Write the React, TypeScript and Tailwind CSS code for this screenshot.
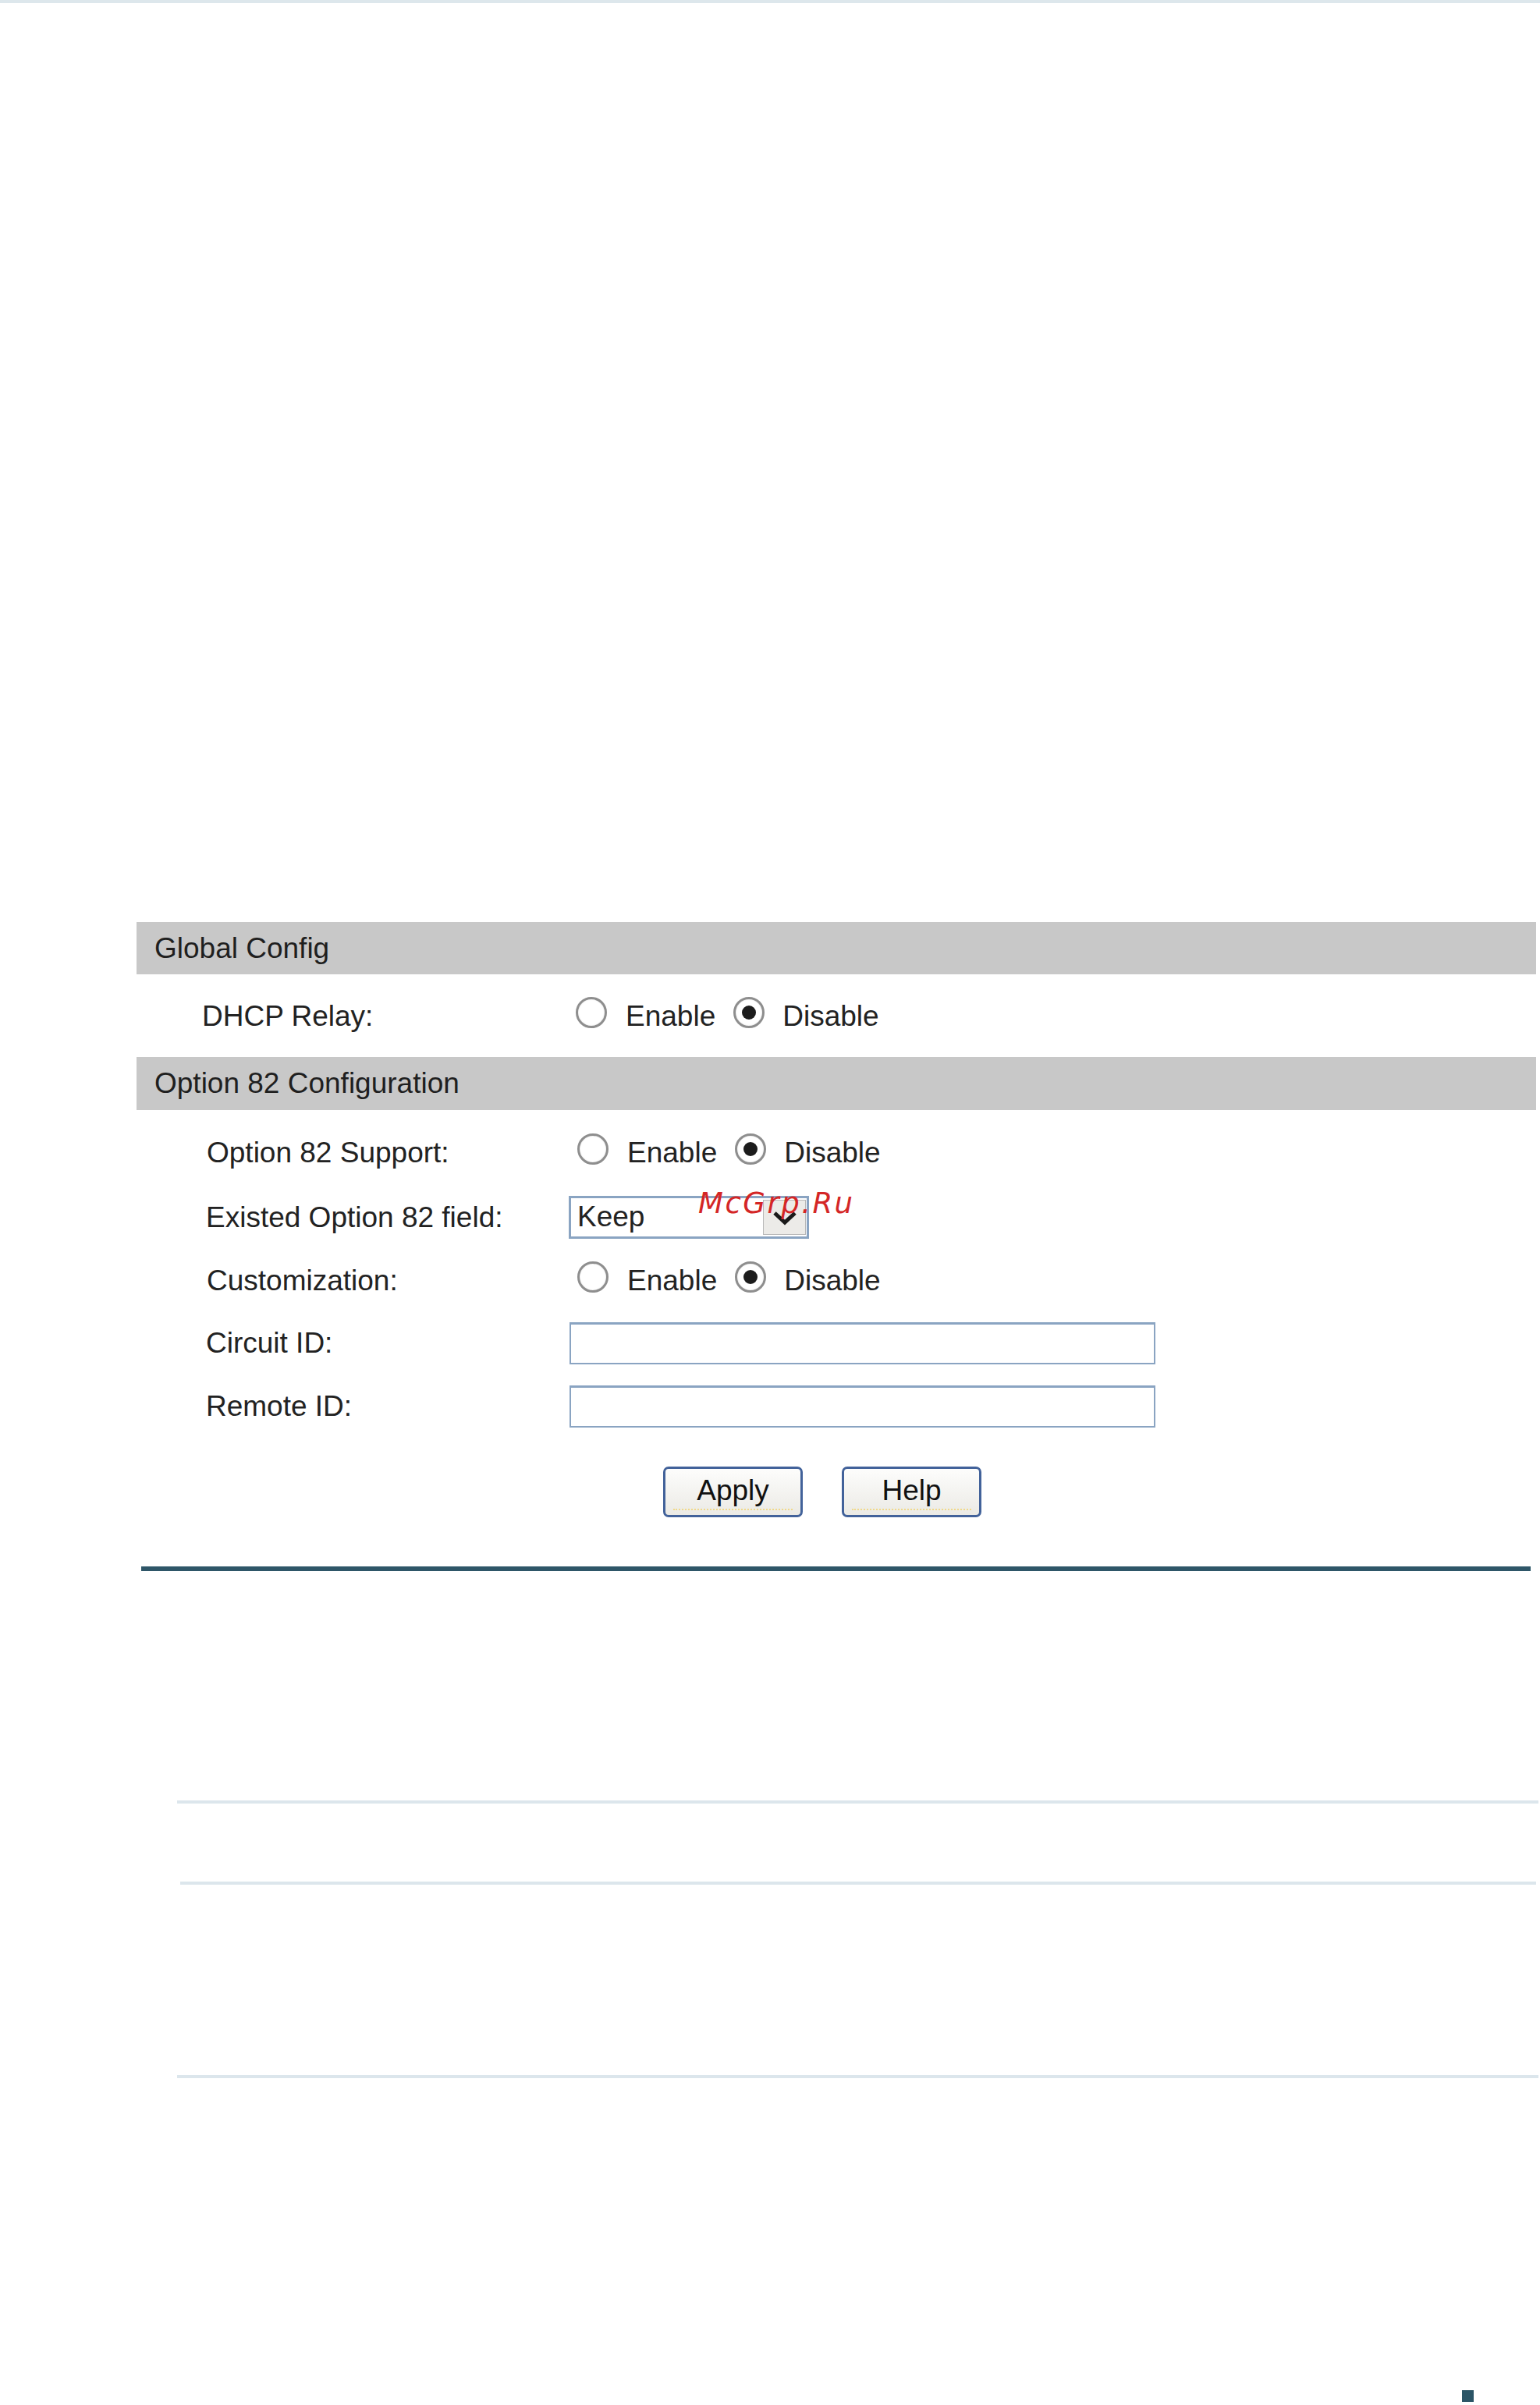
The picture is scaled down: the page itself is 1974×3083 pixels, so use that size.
import React from "react";

function Radio({ checked }: { checked?: boolean }) {
  return (
    <span className="w-[40px] h-[40px] rounded-full border-[3px] border-[#8e8e8e] bg-white flex items-center justify-center shrink-0 mb-[10px] shadow-[inset_0_0_2px_rgba(0,0,0,0.15)]">
      {checked && <span className="w-[18px] h-[18px] rounded-full bg-[#1c1c1c]" />}
    </span>
  );
}

function RadioGroup({ ml }: { ml: string }) {
  return (
    <div className={`flex items-center ${ml}`}>
      <Radio />
      <span className="ml-[24px]">Enable</span>
      <span className="ml-[23px] flex items-center">
        <Radio checked />
      </span>
      <span className="ml-[23px]">Disable</span>
    </div>
  );
}

function Bar({ children }: { children: React.ReactNode }) {
  return (
    <div className="h-[67px] bg-[#c8c8c8] flex items-center pl-[23px] text-[#1f1f1f]">
      {children}
    </div>
  );
}

function Btn({ children }: { children: React.ReactNode }) {
  return (
    <button className="relative w-[179px] h-[65px] rounded-[7px] border-[3px] border-[#42629a] bg-gradient-to-b from-[#fdfdfc] to-[#ebeae5] text-[37px] text-[#111] flex items-center justify-center leading-none">
      <span className="mb-[4px]">{children}</span>
      <span className="absolute left-[10px] right-[10px] bottom-[6px] border-b-[2px] border-dotted border-[#f0d98a]" />
    </button>
  );
}

export default function App() {
  return (
    <div className="w-[1974px] h-[3083px] overflow-hidden bg-white font-['Liberation_Sans',Arial,sans-serif] text-[37px] text-[#222]">
      <div className="h-[4px] bg-[#dde7ec]" />

      <div className="mt-[1178px] ml-[175px] w-[1794px]">
        <Bar>Global Config</Bar>
        <div className="h-[106px] flex items-center pl-[84px] pt-[2px]">
          <span className="w-[469px] shrink-0">DHCP Relay:</span>
          <RadioGroup ml="ml-[10px]" />
        </div>
        <div className="h-[68px] bg-[#c8c8c8] flex items-center pl-[23px] text-[#1f1f1f]">
          Option 82 Configuration
        </div>

        <div className="pt-[14px]">
          <div className="h-[82px] flex items-center pl-[90px]">
            <span className="w-[465px] shrink-0">Option 82 Support:</span>
            <RadioGroup ml="ml-[10px]" />
          </div>
          <div className="relative h-[83px] flex items-center pl-[89px]">
            <span className="w-[465px] shrink-0">Existed Option 82 field:</span>
            <div className="w-[308px] h-[55px] border-[3px] border-[#8aa4c2] bg-white flex items-center justify-between pl-[8px] pr-[1px]">
              <span className="leading-none mb-[2px]">Keep</span>
              <span className="w-[55px] h-[45px] bg-[#ecebe8] border border-[#b8b8b8] flex items-center justify-center">
                <svg width="34" height="20" viewBox="0 0 34 20">
                  <polyline points="4,4 17,16 30,4" fill="none" stroke="#1a1a1a" strokeWidth="5" strokeLinejoin="miter" />
                </svg>
              </span>
            </div>
            <span className="absolute left-[720px] top-[5px] font-['DejaVu_Sans',sans-serif] italic text-[37px] leading-none tracking-[2.5px] text-[#d42626]">
              McGrp.Ru
            </span>
          </div>
          <div className="h-[80px] flex items-center pl-[90px]">
            <span className="w-[465px] shrink-0">Customization:</span>
            <RadioGroup ml="ml-[10px]" />
          </div>
          <div className="h-[80px] flex items-center pl-[89px]">
            <span className="w-[466px] shrink-0">Circuit ID:</span>
            <div className="w-[751px] h-[54px] border-2 border-t-[3px] border-[#8aa4c2] bg-white" />
          </div>
          <div className="h-[82px] flex items-center pl-[89px]">
            <span className="w-[466px] shrink-0">Remote ID:</span>
            <div className="w-[751px] h-[54px] border-2 border-t-[3px] border-[#8aa4c2] bg-white" />
          </div>
        </div>

        <div className="mt-[36px] flex pl-[675px] gap-[50px]">
          <Btn>Apply</Btn>
          <Btn>Help</Btn>
        </div>
      </div>

      <div className="mt-[63px] ml-[181px] w-[1781px] h-[6px] bg-[#2e5668]" />

      <div className="mt-[294px] ml-[227px] w-[1745px] h-[4px] bg-[#dce6ec]" />
      <div className="mt-[100px] ml-[231px] w-[1738px] h-[4px] bg-[#dce6ec]" />
      <div className="mt-[244px] ml-[227px] w-[1745px] h-[4px] bg-[#dce6ec]" />

      <div className="mt-[400px] ml-[1874px] w-[15px] h-[15px] bg-[#2b5566]" />
    </div>
  );
}
